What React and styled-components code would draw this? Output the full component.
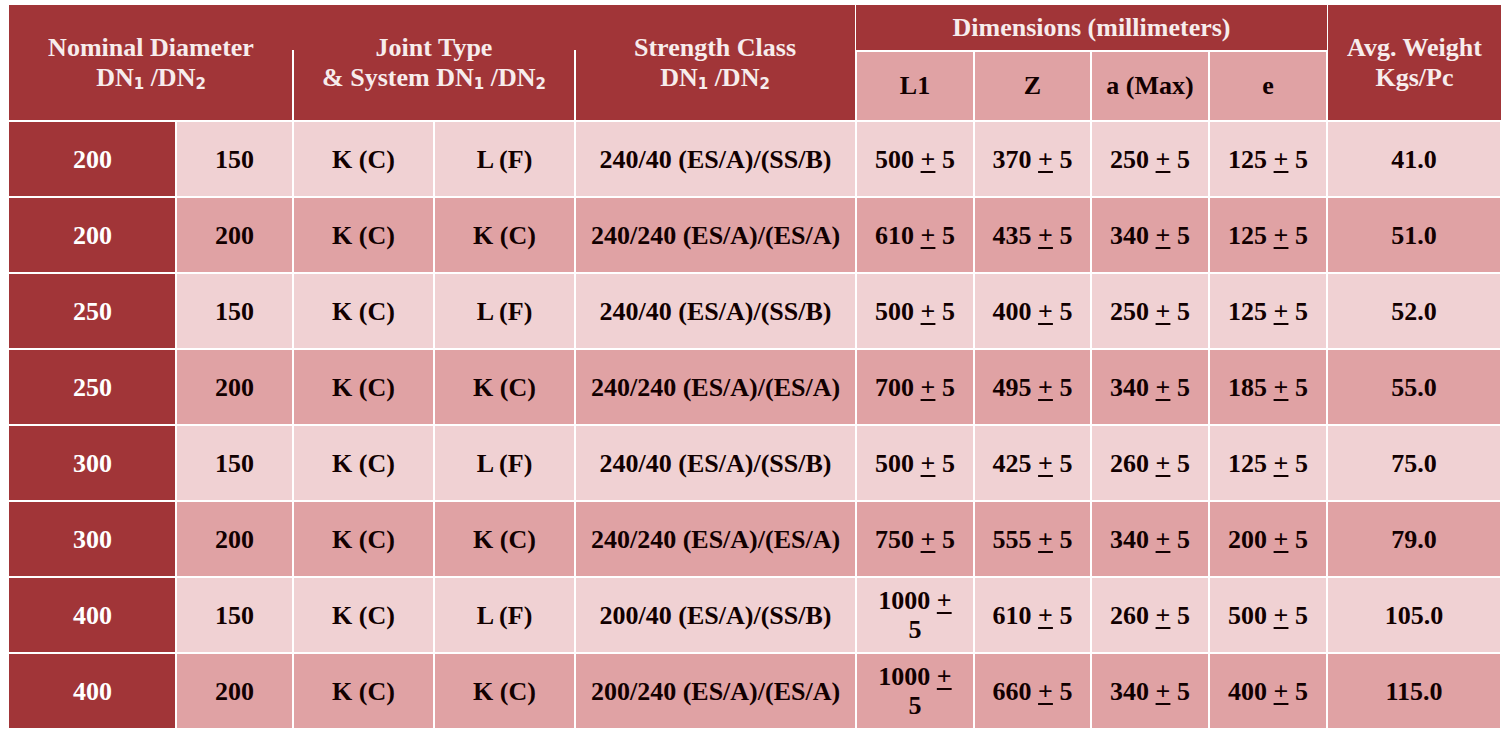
import React from 'react';
import styled, { createGlobalStyle } from 'styled-components';

const GlobalStyle = createGlobalStyle`
  html, body {
    margin: 0;
    padding: 0;
    background: #ffffff;
  }
`;

const RED = '#a13538';
const LIGHT = '#f0d1d3';
const DARK = '#e0a2a4';

const Table = styled.table`
  margin: 5px 0 0 8px;
  width: 1492px;
  table-layout: fixed;
  border-collapse: collapse;
  font-family: "Liberation Serif", "Times New Roman", serif;
  font-weight: 700;
  text-align: center;
`;

const HeadCell = styled.th`
  position: relative;
  background: ${RED};
  color: #f7ecec;
  font-size: 26px;
  line-height: 30px;
  font-weight: 700;
  padding: 0;
  height: ${(p) => (p.top ? '45px' : 'auto')};
  vertical-align: middle;

  ${(p) =>
    p.divider &&
    `
    &::before {
      content: '';
      position: absolute;
      left: -1px;
      top: 45px;
      bottom: 0;
      width: 2px;
      background: #ffffff;
    }
  `}
`;

const SubHeadCell = styled.th`
  background: ${DARK};
  color: #120000;
  font-size: 26px;
  font-weight: 700;
  height: 68px;
  padding: 0;
  border: 2px solid #ffffff;
  border-bottom: none;
`;

const Cell = styled.td`
  background: ${(p) => (p.lead ? RED : p.shade ? DARK : LIGHT)};
  color: ${(p) => (p.lead ? '#ffffff' : '#120000')};
  border: 2px solid #ffffff;
  border-left-color: ${(p) => (p.first ? 'transparent' : '#ffffff')};
  font-size: 26px;
  line-height: 29px;
  height: 74px;
  padding: 0 14px;
  vertical-align: middle;
`;

const Sub = styled.sub`
  font-family: "DejaVu Sans", sans-serif;
  font-size: 15px;
  vertical-align: -3px;
  line-height: 0;
`;

const Pm = styled.span`
  text-decoration: underline;
  text-decoration-thickness: 2px;
  text-underline-offset: 3px;
`;

const DN = () => (
  <>
    DN<Sub>1</Sub> /DN<Sub>2</Sub>
  </>
);

const widths = [167, 117, 141, 141, 281, 118, 117, 118, 118, 174];

const rows = [
  ['200', '150', 'K (C)', 'L (F)', '240/40 (ES/A)/(SS/B)', '500', '370', '250', '125', '41.0'],
  ['200', '200', 'K (C)', 'K (C)', '240/240 (ES/A)/(ES/A)', '610', '435', '340', '125', '51.0'],
  ['250', '150', 'K (C)', 'L (F)', '240/40 (ES/A)/(SS/B)', '500', '400', '250', '125', '52.0'],
  ['250', '200', 'K (C)', 'K (C)', '240/240 (ES/A)/(ES/A)', '700', '495', '340', '185', '55.0'],
  ['300', '150', 'K (C)', 'L (F)', '240/40 (ES/A)/(SS/B)', '500', '425', '260', '125', '75.0'],
  ['300', '200', 'K (C)', 'K (C)', '240/240 (ES/A)/(ES/A)', '750', '555', '340', '200', '79.0'],
  ['400', '150', 'K (C)', 'L (F)', '200/40 (ES/A)/(SS/B)', '1000', '610', '260', '500', '105.0'],
  ['400', '200', 'K (C)', 'K (C)', '200/240 (ES/A)/(ES/A)', '1000', '660', '340', '400', '115.0'],
];

const Tol = ({ v }) => (
  <>
    {v} <Pm>+</Pm> 5
  </>
);

export default function App() {
  return (
    <>
      <GlobalStyle />
      <Table>
        <colgroup>
          {widths.map((w, i) => (
            <col key={i} style={{ width: w }} />
          ))}
        </colgroup>
        <thead>
          <tr>
            <HeadCell top rowSpan={2} colSpan={2}>
              Nominal Diameter
              <br />
              <DN />
            </HeadCell>
            <HeadCell top divider rowSpan={2} colSpan={2}>
              Joint Type
              <br />& System <DN />
            </HeadCell>
            <HeadCell top divider rowSpan={2}>
              Strength Class
              <br />
              <DN />
            </HeadCell>
            <HeadCell top colSpan={4}>
              Dimensions (millimeters)
            </HeadCell>
            <HeadCell top rowSpan={2}>
              Avg. Weight
              <br />
              Kgs/Pc
            </HeadCell>
          </tr>
          <tr>
            <SubHeadCell>L1</SubHeadCell>
            <SubHeadCell>Z</SubHeadCell>
            <SubHeadCell>a (Max)</SubHeadCell>
            <SubHeadCell>e</SubHeadCell>
          </tr>
        </thead>
        <tbody>
          {rows.map((r, i) => {
            const shade = i % 2 === 1;
            return (
              <tr key={i}>
                <Cell lead first>{r[0]}</Cell>
                <Cell shade={shade}>{r[1]}</Cell>
                <Cell shade={shade}>{r[2]}</Cell>
                <Cell shade={shade}>{r[3]}</Cell>
                <Cell shade={shade}>{r[4]}</Cell>
                {r.slice(5, 9).map((v, j) => (
                  <Cell key={j} shade={shade}>
                    <Tol v={v} />
                  </Cell>
                ))}
                <Cell shade={shade}>{r[9]}</Cell>
              </tr>
            );
          })}
        </tbody>
      </Table>
    </>
  );
}
